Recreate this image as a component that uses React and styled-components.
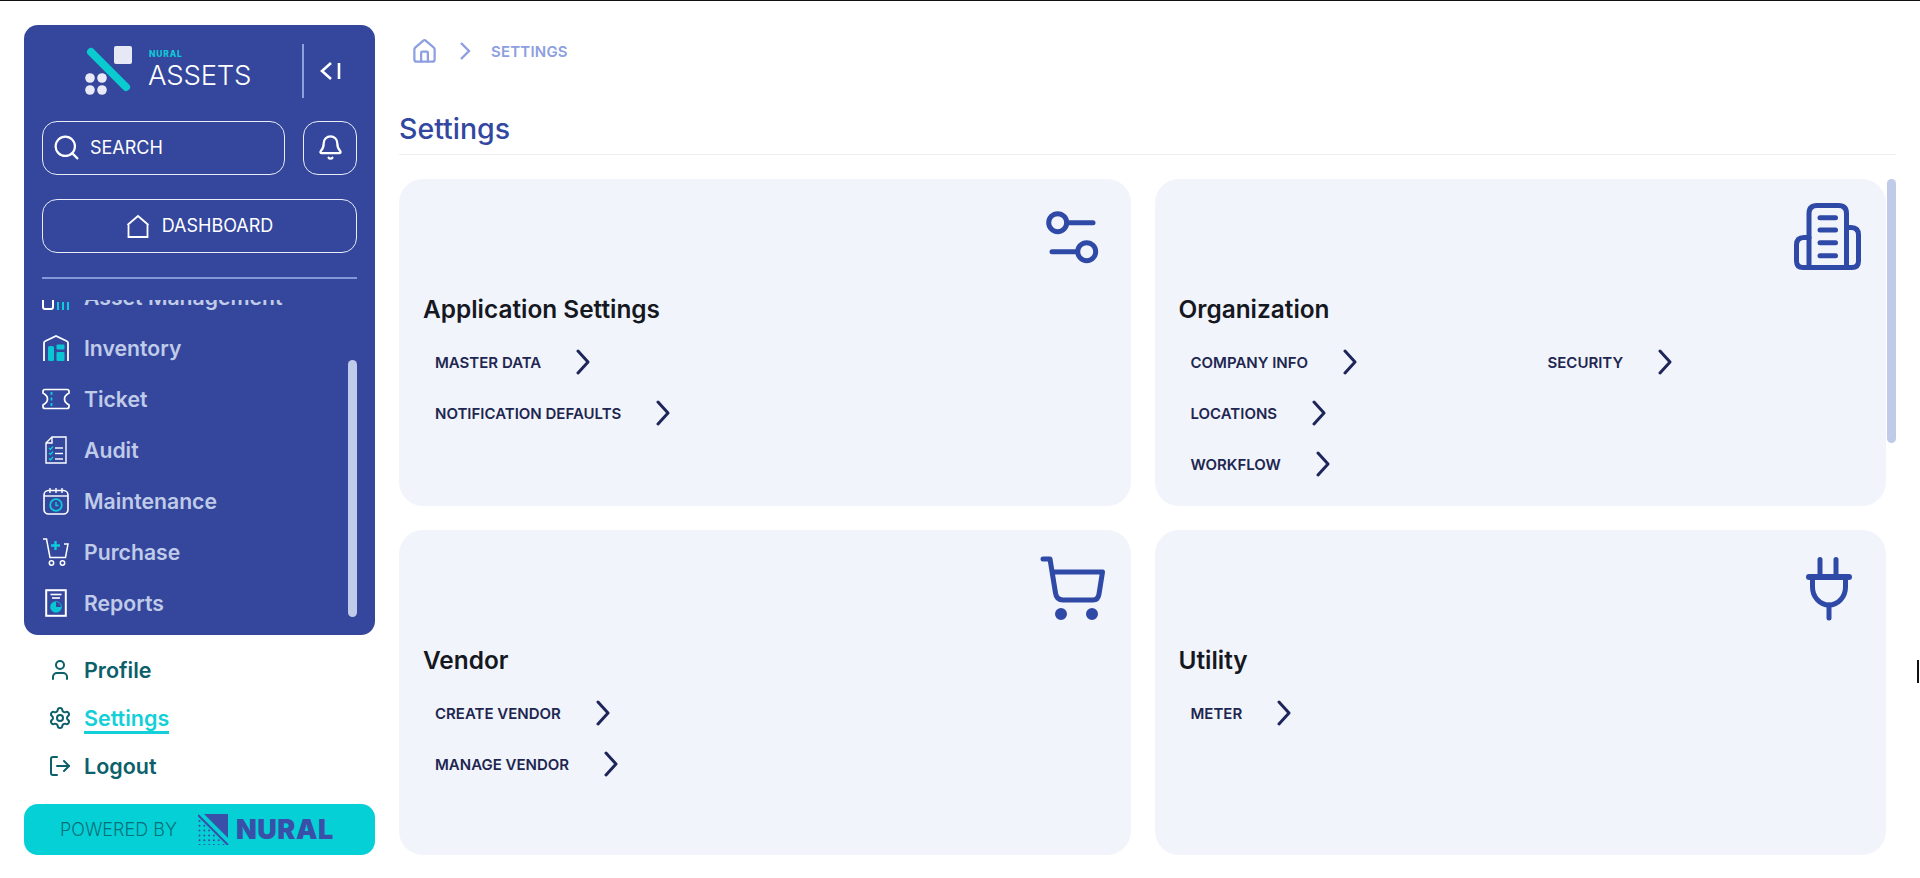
import React from "react";
import styled, { createGlobalStyle } from "styled-components";
import { Search, Bell, User, Settings as Gear, LogOut, House } from "lucide-react";

const GlobalStyle = createGlobalStyle`
  html, body { margin: 0; padding: 0; height: 100%; background: #fff; overflow: hidden; }
  body { font-family: Inter, "Liberation Sans", sans-serif; }
  * { box-sizing: border-box; }
`;

const Page = styled.div`
  position: relative;
  display: flex;
  height: 100vh;
  border-top: 1.5px solid #111;
`;

const Side = styled.aside`
  width: 399px;
  flex: none;
  padding: 23.5px 24px 0;
  display: flex;
  flex-direction: column;
`;

const Panel = styled.div`
  height: 610px;
  background: #34479c;
  border-radius: 14px;
  padding: 0 18px;
  display: flex;
  flex-direction: column;
  overflow: hidden;
`;

const Head = styled.div`
  height: 96px;
  flex: none;
  display: flex;
  align-items: center;
  padding: 0 0 4px 42px;
`;

const LogoText = styled.div`
  margin-left: 14px;
  display: flex;
  flex-direction: column;
  color: #fff;
`;

const LogoSmall = styled.span`
  font-size: 8.5px;
  line-height: 9px;
  font-weight: 800;
  letter-spacing: 0.8px;
  color: #0fc8d8;
  margin: 0 0 1.5px 1px;
`;

const LogoBig = styled.span`
  font-size: 27.5px;
  line-height: 31px;
  font-weight: 300;
  letter-spacing: -0.2px;
`;

const HeadRule = styled.div`
  width: 2px;
  height: 54px;
  background: #8ea1df;
  margin-left: 51px;
`;

const Collapse = styled.div`
  margin-left: 15px;
  display: flex;
`;

const TopRow = styled.div`
  display: flex;
  gap: 18px;
`;

const Outline = styled.div`
  height: 54px;
  flex: ${(p) => (p.$square ? "0 0 54px" : "1")};
  border: 1.5px solid #e8ecf8;
  border-radius: 15px;
  display: flex;
  align-items: center;
  justify-content: ${(p) => (p.$start ? "flex-start" : "center")};
  gap: ${(p) => (p.$start ? "9px" : "12px")};
  padding-left: ${(p) => (p.$start ? "9px" : "0")};
  color: #fff;
  font-size: 18px;
  font-weight: 400;
`;

const DashWrap = styled.div`
  margin-top: 24px;
  display: flex;
`;

const SideRule = styled.div`
  height: 2px;
  flex: none;
  margin-top: 24px;
  background: #8397db;
`;

const NavClip = styled.nav`
  position: relative;
  flex: 1;
  margin-top: 21px;
  overflow: hidden;
`;

const NavList = styled.div`
  margin-top: -28px;
`;

const NavItem = styled.div`
  height: 51px;
  display: flex;
  align-items: center;
  color: #c0cbe9;
  font-size: 21.2px;
  font-weight: 600;
`;

const NavIcon = styled.span`
  width: 28px;
  margin-right: 14px;
  display: flex;
  justify-content: center;
`;

const Thumb = styled.div`
  position: absolute;
  right: 0;
  top: ${(p) => p.$top}px;
  width: 9px;
  height: ${(p) => p.$h}px;
  border-radius: 5px;
  background: #c0cbe9;
`;

const Extras = styled.div`
  margin-top: 11px;
  padding-left: 36px;
  height: 158px;
`;

const ExtraItem = styled.div`
  height: 48px;
  display: flex;
  align-items: center;
  color: ${(p) => (p.$active ? "#13cfd8" : "#0d5f6a")};
  font-size: 21.5px;
  font-weight: 600;
`;

const ExtraIcon = styled.span`
  width: 24px;
  display: flex;
  justify-content: center;
  margin-right: 12px;
  margin-left: -12px;
  color: #0d5f6a;
`;

const ExtraLabel = styled.span`
  border-bottom: ${(p) => (p.$active ? "3px solid #13cfd8" : "none")};
  line-height: 26px;
  margin-top: ${(p) => (p.$active ? "3px" : "0")};
`;

const Powered = styled.div`
  height: 51px;
  border-radius: 14px;
  background: #04d0d6;
  display: flex;
  align-items: center;
  padding-left: 36px;
  color: #087079;
  font-size: 18px;
  font-weight: 300;
`;

const PoweredLabel = styled.span`
  margin-right: 21px;
`;

const NuralWord = styled.span`
  margin-left: 7px;
  font-size: 27px;
  font-weight: 900;
  letter-spacing: 0.6px;
  color: #3a4fa8;
`;

const Main = styled.main`
  flex: 1;
  min-width: 0;
  display: flex;
  flex-direction: column;
  padding-right: 24px;
`;

const Crumbs = styled.div`
  height: 100.5px;
  flex: none;
  display: flex;
  align-items: center;
  padding-left: 12px;
  color: #8d9fe0;
  font-size: 15px;
  font-weight: 600;
  letter-spacing: 0.2px;
`;

const CrumbChevron = styled.svg`
  margin: 0 20px 0 21px;
`;

const Title = styled.h1`
  margin: 0;
  height: 53px;
  flex: none;
  padding-top: 11.5px;
  font-size: 28.5px;
  line-height: 32px;
  font-weight: 500;
  color: #32479f;
  border-bottom: 1px solid #edeef2;
`;

const Scroller = styled.div`
  position: relative;
  flex: 1;
  margin-top: 24px;
  padding-right: 10px;
  overflow: hidden;
`;

const Cards = styled.div`
  display: grid;
  grid-template-columns: 1fr 1fr;
  grid-template-rows: 327px 325px;
  gap: 24px;
`;

const Card = styled.section`
  background: #f2f4fc;
  border-radius: 24px;
  padding: 20px 20px 0 24px;
`;

const CardIcon = styled.div`
  height: 76px;
  display: flex;
  justify-content: flex-end;
`;

const CardTitle = styled.h2`
  margin: 19px 0 13px;
  font-size: 24.4px;
  line-height: 30px;
  font-weight: 600;
  color: #16181f;
`;

const Links = styled.div`
  display: grid;
  grid-template-rows: repeat(3, 51px);
  grid-template-columns: 357px 1fr;
  grid-auto-flow: column;
`;

const LinkRow = styled.a`
  display: flex;
  align-items: center;
  gap: 35px;
  padding-left: 12px;
  color: #20264f;
  font-size: 15px;
  font-weight: 600;
`;

const CursorMark = styled.div`
  position: absolute;
  right: 1px;
  top: 659px;
  width: 2px;
  height: 23px;
  background: #111;
`;

const teal = "#0ccbdc";

const LogoMark = () => (
  <svg width="50" height="50" viewBox="0 0 50 50">
    <rect x="30" y="0" width="18" height="18" rx="2" fill="#e6e9f5" />
    <line x1="7" y1="6" x2="42" y2="41" stroke="#0acbd0" strokeWidth="8" strokeLinecap="round" />
    <circle cx="6" cy="32" r="4.8" fill="#e8ebf7" />
    <circle cx="18" cy="32" r="4.8" fill="#e8ebf7" />
    <circle cx="6" cy="44" r="4.8" fill="#e8ebf7" />
    <circle cx="18" cy="44" r="4.8" fill="#e8ebf7" />
  </svg>
);

const CollapseIcon = () => (
  <svg width="24" height="20" viewBox="0 0 24 20" fill="none" stroke="#fff" strokeWidth="2.6">
    <polyline points="12,2 3,10 12,18" />
    <line x1="20" y1="2" x2="20" y2="18" />
  </svg>
);

const HomeOutline = () => (
  <svg width="24" height="24" viewBox="0 0 24 24" fill="none" stroke="#fff" strokeWidth="1.8">
    <path d="M1.5 11 L12 2 L22.5 11 M2.5 10.5 V23 H21.5 V10.5" />
  </svg>
);

const AssetIcon = () => (
  <svg width="28" height="25" viewBox="0 0 28 25">
    <rect x="1" y="13" width="10" height="11" rx="2" fill="none" stroke="#fff" strokeWidth="2" />
    <g fill={teal}>
      <rect x="15" y="17" width="2" height="8" />
      <rect x="20" y="17" width="2" height="8" />
      <rect x="25" y="17" width="2" height="8" />
    </g>
  </svg>
);

const InventoryIcon = () => (
  <svg width="28" height="28" viewBox="0 0 28 28">
    <path d="M2 27 V9 Q2 7.5 3.5 7 L14 2 L24.5 7 Q26 7.5 26 9 V27" fill="none" stroke="#fff" strokeWidth="1.8" />
    <g fill="#0ac6d4">
      <rect x="6" y="12" width="6" height="15" rx="1.5" />
      <rect x="14.5" y="10.5" width="8" height="5" rx="1" />
      <rect x="14.5" y="18" width="8" height="9" rx="1" />
    </g>
  </svg>
);

const TicketIcon = () => (
  <svg width="28" height="22" viewBox="0 0 28 22">
    <path d="M3 1.5 H25 Q27 1.5 27 3.5 V5 Q22.5 7.5 22.5 11 T27 17 V18.5 Q27 20.5 25 20.5 H3 Q1 20.5 1 18.5 V17 Q5.5 14.5 5.5 11 T1 5 V3.5 Q1 1.5 3 1.5 Z" fill="none" stroke="#fff" strokeWidth="1.7" />
    <line x1="9.5" y1="4" x2="9.5" y2="19" stroke={teal} strokeWidth="1.8" strokeDasharray="3 2.5" />
  </svg>
);

const AuditIcon = () => (
  <svg width="22" height="28" viewBox="0 0 22 28" fill="none">
    <path d="M7 1 H21 V27 H1 V7 Z M7 1 V7 H1" stroke="#fff" strokeWidth="1.4" />
    <g stroke={teal} strokeWidth="1.4">
      <polyline points="4,12 5.5,13.5 8,10.5" />
      <polyline points="4,17 5.5,18.5 8,15.5" />
      <polyline points="4,22.5 5.5,24 8,21" />
    </g>
    <g stroke="#fff" strokeWidth="1.4">
      <line x1="10" y1="12" x2="18" y2="12" />
      <line x1="10" y1="17.5" x2="18" y2="17.5" />
      <line x1="10" y1="23" x2="18" y2="23" />
    </g>
  </svg>
);

const MaintenanceIcon = () => (
  <svg width="26" height="28" viewBox="0 0 26 28" fill="none">
    <rect x="1" y="3.5" width="24" height="23.5" rx="4.5" stroke="#fff" strokeWidth="1.6" />
    <line x1="1" y1="9" x2="25" y2="9" stroke="#fff" strokeWidth="1.4" />
    <g stroke="#fff" strokeWidth="1.4">
      <line x1="7" y1="1" x2="7" y2="6" />
      <line x1="13" y1="1" x2="13" y2="6" />
      <line x1="19" y1="1" x2="19" y2="6" />
    </g>
    <circle cx="13" cy="18" r="5.8" stroke={teal} strokeWidth="1.8" />
    <polyline points="13,15 13,18.5 15.5,18.5" stroke={teal} strokeWidth="1.4" />
  </svg>
);

const PurchaseIcon = () => (
  <svg width="28" height="28" viewBox="0 0 28 28" fill="none">
    <path d="M1 1 H4.5 L8 19.5 H23.5 L26 6 H22" stroke="#fff" strokeWidth="1.5" />
    <circle cx="9.5" cy="25" r="2.2" stroke="#fff" strokeWidth="1.5" />
    <circle cx="20.5" cy="25" r="2.2" stroke="#fff" strokeWidth="1.5" />
    <path d="M13.5 3 V12 M9 7.5 H18" stroke={teal} strokeWidth="2.4" />
  </svg>
);

const ReportsIcon = () => (
  <svg width="22" height="28" viewBox="0 0 22 28" fill="none">
    <rect x="1.2" y="1.2" width="19.6" height="25.6" stroke="#fff" strokeWidth="2" />
    <line x1="5.5" y1="5.5" x2="16.5" y2="5.5" stroke="#fff" strokeWidth="1.6" />
    <line x1="7" y1="9" x2="15" y2="9" stroke="#fff" strokeWidth="1.6" />
    <circle cx="11" cy="18" r="5.8" fill="#0ac6d4" />
    <path d="M11 18 V13 A5 5 0 0 1 16 18 Z" fill="#34479c" />
  </svg>
);

const NuralMark = () => {
  const dots = [];
  for (let r = 0; r < 6; r++) {
    for (let c = 0; c <= r; c++) {
      dots.push(<circle key={r + "-" + c} cx={1.5 + c * 4.8} cy={7 + r * 4.8} r="1" fill="#3a4fa8" />);
    }
  }
  return (
    <svg width="31" height="31" viewBox="0 0 31 31">
      <polygon points="6,0 30,0 30,24" fill="#3a4fa8" />
      <line x1="0" y1="1" x2="30" y2="31" stroke="#3a4fa8" strokeWidth="2" />
      {dots}
    </svg>
  );
};

const BigIcon = ({ children }) => (
  <svg width="76" height="76" viewBox="0 0 76 76" fill="none" stroke="#2f49a6" strokeWidth="5" strokeLinecap="round" strokeLinejoin="round">
    {children}
  </svg>
);

const SlidersIcon = () => (
  <BigIcon>
    <circle cx="22.7" cy="23.7" r="9" />
    <line x1="32" y1="23.7" x2="58" y2="23.7" />
    <circle cx="51.7" cy="52.7" r="9" />
    <line x1="17" y1="52.7" x2="42" y2="52.7" />
  </BigIcon>
);

const BuildingIcon = () => (
  <BigIcon>
    <path d="M19 68.5 V14.5 Q19 6.5 27 6.5 H48.5 Q56.5 6.5 56.5 14.5 V68.5" />
    <path d="M19 38.5 H14 Q6.5 38.5 6.5 46 V62 Q6.5 68.5 13 68.5 H62 Q68.5 68.5 68.5 62 V36 Q68.5 28.5 61 28.5 H56.5" />
    <line x1="30" y1="18.7" x2="45.5" y2="18.7" />
    <line x1="30" y1="31" x2="45.5" y2="31" />
    <line x1="30" y1="43.7" x2="45.5" y2="43.7" />
    <line x1="30" y1="56.7" x2="45.5" y2="56.7" />
  </BigIcon>
);

const CartIcon = () => (
  <BigIcon>
    <path d="M8 9 H15 L20.5 43 Q21.5 50 28 50 H58 Q63 50 64 44 L67.5 22 H18" />
    <circle cx="26" cy="64" r="3.5" fill="#2f49a6" />
    <circle cx="57" cy="64" r="3.5" fill="#2f49a6" />
  </BigIcon>
);

const PlugIcon = () => (
  <BigIcon>
    <line x1="30" y1="9.5" x2="30" y2="26" />
    <line x1="46" y1="9.5" x2="46" y2="26" />
    <line x1="19" y1="27" x2="59" y2="27" strokeWidth="6" />
    <path d="M22.5 28 V37 C22.5 47 30 55 39 55 S55.5 47 55.5 37 V28" />
    <line x1="39" y1="55" x2="39" y2="68" />
  </BigIcon>
);

const Chevron = () => (
  <svg width="14" height="26" viewBox="0 0 14 26" fill="none" stroke="#1e2559" strokeWidth="3" strokeLinecap="round" strokeLinejoin="round">
    <polyline points="2,2 12,13 2,24" />
  </svg>
);

const navItems = [
  { label: "Asset Management", icon: <AssetIcon /> },
  { label: "Inventory", icon: <InventoryIcon /> },
  { label: "Ticket", icon: <TicketIcon /> },
  { label: "Audit", icon: <AuditIcon /> },
  { label: "Maintenance", icon: <MaintenanceIcon /> },
  { label: "Purchase", icon: <PurchaseIcon /> },
  { label: "Reports", icon: <ReportsIcon /> },
];

const cards = [
  { title: "Application Settings", icon: <SlidersIcon />, links: ["MASTER DATA", "NOTIFICATION DEFAULTS"] },
  { title: "Organization", icon: <BuildingIcon />, links: ["COMPANY INFO", "LOCATIONS", "WORKFLOW", "SECURITY"] },
  { title: "Vendor", icon: <CartIcon />, links: ["CREATE VENDOR", "MANAGE VENDOR"] },
  { title: "Utility", icon: <PlugIcon />, links: ["METER"] },
];

export default function App() {
  return (
    <Page>
      <GlobalStyle />
      <Side>
        <Panel>
          <Head>
            <LogoMark />
            <LogoText>
              <LogoSmall>NURAL</LogoSmall>
              <LogoBig>ASSETS</LogoBig>
            </LogoText>
            <HeadRule />
            <Collapse>
              <CollapseIcon />
            </Collapse>
          </Head>
          <TopRow>
            <Outline $start>
              <Search size={29} strokeWidth={1.8} />
              SEARCH
            </Outline>
            <Outline $square>
              <Bell size={27} strokeWidth={2} />
            </Outline>
          </TopRow>
          <DashWrap>
            <Outline>
              <HomeOutline />
              DASHBOARD
            </Outline>
          </DashWrap>
          <SideRule />
          <NavClip>
            <NavList>
              {navItems.map((item) => (
                <NavItem key={item.label}>
                  <NavIcon>{item.icon}</NavIcon>
                  {item.label}
                </NavItem>
              ))}
            </NavList>
            <Thumb $top={60} $h={257} />
          </NavClip>
        </Panel>
        <Extras>
          <ExtraItem>
            <ExtraIcon>
              <User size={24} strokeWidth={2} />
            </ExtraIcon>
            Profile
          </ExtraItem>
          <ExtraItem $active>
            <ExtraIcon>
              <Gear size={24} strokeWidth={2} />
            </ExtraIcon>
            <ExtraLabel $active>Settings</ExtraLabel>
          </ExtraItem>
          <ExtraItem>
            <ExtraIcon>
              <LogOut size={24} strokeWidth={2} />
            </ExtraIcon>
            Logout
          </ExtraItem>
        </Extras>
        <Powered>
          <PoweredLabel>POWERED BY</PoweredLabel>
          <NuralMark />
          <NuralWord>NURAL</NuralWord>
        </Powered>
      </Side>
      <Main>
        <Crumbs>
          <House size={27} strokeWidth={2} />
          <CrumbChevron width="12" height="20" viewBox="0 0 12 20" fill="none" stroke="#8d9fe0" strokeWidth="2.4">
            <polyline points="2,2 10,10 2,18" />
          </CrumbChevron>
          SETTINGS
        </Crumbs>
        <Title>Settings</Title>
        <Scroller>
          <Cards>
            {cards.map((card) => (
              <Card key={card.title}>
                <CardIcon>{card.icon}</CardIcon>
                <CardTitle>{card.title}</CardTitle>
                <Links>
                  {card.links.map((link) => (
                    <LinkRow key={link}>
                      {link}
                      <Chevron />
                    </LinkRow>
                  ))}
                </Links>
              </Card>
            ))}
          </Cards>
          <Thumb $top={0} $h={264} />
        </Scroller>
      </Main>
      <CursorMark />
    </Page>
  );
}
